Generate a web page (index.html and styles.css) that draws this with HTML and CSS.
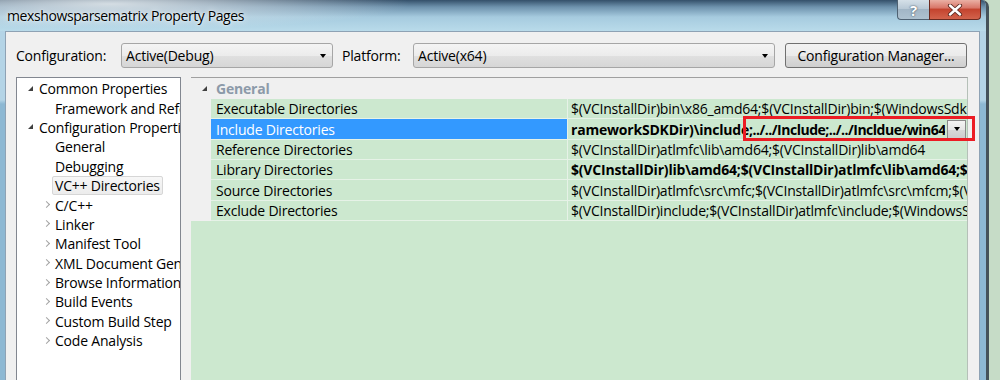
FILE: index.html
```html
<!DOCTYPE html>
<html lang="en">
<head>
    <meta charset="UTF-8">
    <title>mexshowsparsematrix Property Pages</title>
    <link rel="stylesheet" href="styles.css">
</head>
<body>
<div class="window">
    <!-- caption -->
    <div class="titlebar">
        <span class="title">mexshowsparsematrix Property Pages</span>
        <div class="caption-btns">
            <span class="cb help">?</span>
            <span class="cb close">
                <svg width="16" height="12" viewBox="0 0 16 12">
                    <path d="M3 1.5 L13 10.5 M13 1.5 L3 10.5" stroke="#5a2a22" stroke-width="4.2" stroke-linecap="round"/>
                    <path d="M3 1.5 L13 10.5 M13 1.5 L3 10.5" stroke="#ffffff" stroke-width="2.4" stroke-linecap="round"/>
                </svg>
            </span>
        </div>
    </div>

    <div class="client">
        <!-- configuration / platform -->
        <div class="toolbar">
            <label class="lbl cfg">Configuration:</label>
            <div class="combo c1"><span>Active(Debug)</span><i class="arrow"></i></div>
            <label class="lbl plat">Platform:</label>
            <div class="combo c2"><span>Active(x64)</span><i class="arrow"></i></div>
            <button class="btn">Configuration Manager...</button>
        </div>

        <div class="panes">
            <!-- tree -->
            <ul class="tree">
                <li class="node"><i class="exp"></i>Common Properties</li>
                <li class="leaf">Framework and References</li>
                <li class="node"><i class="exp"></i>Configuration Properties</li>
                <li class="leaf">General</li>
                <li class="leaf">Debugging</li>
                <li class="leaf current"><span>VC++ Directories</span></li>
                <li class="closed"><i class="chev"></i>C/C++</li>
                <li class="closed"><i class="chev"></i>Linker</li>
                <li class="closed"><i class="chev"></i>Manifest Tool</li>
                <li class="closed"><i class="chev"></i>XML Document Generator</li>
                <li class="closed"><i class="chev"></i>Browse Information</li>
                <li class="closed"><i class="chev"></i>Build Events</li>
                <li class="closed"><i class="chev"></i>Custom Build Step</li>
                <li class="closed"><i class="chev"></i>Code Analysis</li>
            </ul>

            <!-- property grid -->
            <div class="grid">
                <div class="cat"><i class="cat-tri"></i>General</div>
                <div class="prow">
                    <span class="gut"></span>
                    <span class="pname">Executable Directories</span>
                    <span class="pval">$(VCInstallDir)bin\x86_amd64;$(VCInstallDir)bin;$(WindowsSdkDir)bin\NETFX 4.0 Tools;$(WindowsSdkDir)bin;$(VSInstallDir)Common7\Tools\bin</span>
                </div>
                <div class="prow picked">
                    <span class="gut"></span>
                    <span class="pname">Include Directories</span>
                    <span class="pval editbox"><b class="edit-text">rameworkSDKDir)\include<span class="tail">;../../Include;../../Incldue/win64</span></b><span class="dropbtn"><i class="arrow"></i></span></span>
                </div>
                <div class="prow">
                    <span class="gut"></span>
                    <span class="pname">Reference Directories</span>
                    <span class="pval">$(VCInstallDir)atlmfc\lib\amd64;$(VCInstallDir)lib\amd64</span>
                </div>
                <div class="prow">
                    <span class="gut"></span>
                    <span class="pname">Library Directories</span>
                    <span class="pval bold">$(VCInstallDir)lib\amd64;$(VCInstallDir)atlmfc\lib\amd64;$(WindowsSdkDir)lib\x64;../../Lib</span>
                </div>
                <div class="prow">
                    <span class="gut"></span>
                    <span class="pname">Source Directories</span>
                    <span class="pval">$(VCInstallDir)atlmfc\src\mfc;$(VCInstallDir)atlmfc\src\mfcm;$(VCInstallDir)atlmfc\src\atl;$(VCInstallDir)crt\src</span>
                </div>
                <div class="prow">
                    <span class="gut"></span>
                    <span class="pname">Exclude Directories</span>
                    <span class="pval">$(VCInstallDir)include;$(VCInstallDir)atlmfc\include;$(WindowsSdkDir)include;$(FrameworkSDKDir)\include</span>
                </div>

                <!-- annotation box -->
                <div class="callout"></div>
            </div>
        </div>
    </div>
</div>
</body>
</html>
```

FILE: styles.css
```css
body {
    margin: 0;
    width: 1000px;
    height: 380px;
    overflow: hidden;
    font-family: "Open Sans", "Noto Sans", sans-serif;
    font-size: 14px;
    letter-spacing: -0.2px;
    color: #000;
    background: linear-gradient(to right, #8aa590 0, #b8d3ba 6px, #c6dcc7 14px);
}

.window {
    width: 986px;
    height: 380px;
    display: flex;
    flex-direction: column;
    border-right: 3px solid #45525a;
    border-top-right-radius: 7px;
    overflow: hidden;
    background: linear-gradient(to bottom, #b4d4e6 0, #b4d4e6 100px, #8db8d3 104px, #8db8d3 100%);
}

/* caption */
.titlebar {
    height: 31px;
    flex: none;
    display: flex;
    align-items: flex-start;
    padding: 0 5px 0 7px;
    background:
        radial-gradient(ellipse 300px 26px at 110px 4px, rgba(226, 232, 236, 0.9), rgba(226, 232, 236, 0)),
        linear-gradient(to bottom, #34506a 0, #6e92ad 7px, #a6cbdf 17px, #b9dbea 31px);
}

.title {
    font-size: 14px;
    letter-spacing: -0.4px;
    line-height: 20px;
    margin-top: 6px;
    text-shadow: 0 0 6px rgba(255, 255, 255, 0.9), 0 0 2px rgba(255, 255, 255, 0.8);
}

.caption-btns {
    margin-left: auto;
    display: flex;
}

.cb {
    height: 20px;
    display: flex;
    align-items: center;
    justify-content: center;
    border: 1px solid #4f6272;
    border-top: none;
    box-sizing: border-box;
}

.help {
    width: 32px;
    border-bottom-left-radius: 4px;
    border-right: none;
    background: linear-gradient(to bottom, #d5e0e8 0, #b9c9d6 45%, #a2b6c6 50%, #aec2d0 100%);
    color: #fff;
    font-weight: bold;
    font-size: 15px;
    text-shadow: 0 0 2px #4d5f6e, 0 0 1px #4d5f6e;
}

.close {
    width: 52px;
    border-bottom-right-radius: 4px;
    border-color: #6b2a20;
    background: linear-gradient(to bottom, #eab0a4 0, #d9786a 40%, #c4442f 50%, #d2634c 100%);
}

/* client */
.client {
    flex: 1;
    margin: 0 6px 0 5px;
    border: 1px solid #8ea2b4;
    background: #f0f0f0;
    padding: 11px 11px 0 10px;
}

.toolbar {
    height: 25px;
    display: flex;
    align-items: center;
}

.lbl {
    flex: none;
}

.cfg {
    width: 105px;
}

.plat {
    width: 71px;
    margin-left: 9px;
}

.combo {
    flex: none;
    height: 25px;
    box-sizing: border-box;
    display: flex;
    align-items: center;
    padding: 0 6px 0 4px;
    border: 1px solid #a6a6a6;
    border-radius: 3px;
    background: linear-gradient(to bottom, #f4f4f4 0, #ececec 50%, #e0e0e0 51%, #d6d6d6 100%);
}

.combo span {
    flex: 1;
}

.c1 {
    width: 212px;
}

.c2 {
    width: 362px;
}

.arrow {
    width: 0;
    height: 0;
    border-left: 3.5px solid transparent;
    border-right: 3.5px solid transparent;
    border-top: 4px solid #000;
}

.btn {
    width: 182px;
    height: 25px;
    margin-left: 10px;
    padding: 0;
    font: inherit;
    letter-spacing: inherit;
    color: #000;
    border: 1px solid #707070;
    border-radius: 3px;
    background: linear-gradient(to bottom, #f2f2f2 0, #ebebeb 50%, #dddddd 51%, #cfcfcf 100%);
}

.panes {
    margin-top: 9px;
    height: 320px;
    display: flex;
    gap: 10px;
}

/* tree */
.tree {
    width: 165px;
    flex: none;
    box-sizing: border-box;
    margin: 0;
    padding: 1px 0 0;
    list-style: none;
    border: 1px solid #828790;
    background: #fff;
    overflow: hidden;
}

.tree li {
    height: 19.4px;
    display: flex;
    align-items: center;
    white-space: nowrap;
}

.tree .node {
    padding-left: 10px;
}

.tree .leaf {
    padding-left: 38px;
}

.tree .closed {
    padding-left: 27px;
}

.exp {
    width: 12px;
    height: 8px;
    flex: none;
    position: relative;
}

.exp::before,
.cat-tri::before {
    content: "";
    position: absolute;
    left: 1px;
    top: 1px;
    width: 0;
    height: 0;
    border-left: 5px solid transparent;
    border-bottom: 5px solid #404040;
}

.chev {
    width: 11px;
    height: 8px;
    flex: none;
    position: relative;
}

.chev::before {
    content: "";
    position: absolute;
    left: 0;
    top: 1px;
    width: 4px;
    height: 4px;
    border-right: 1px solid #a3a3a3;
    border-bottom: 1px solid #a3a3a3;
    transform: rotate(-45deg);
}

.tree .current {
    padding-left: 35px;
}

.tree .current span {
    height: 19px;
    line-height: 17px;
    box-sizing: border-box;
    padding: 0 2px;
    border: 1px solid #d6d6d6;
    border-radius: 2px;
    background: linear-gradient(to bottom, #f7f7f7, #ececec);
}

/* property grid */
.grid {
    flex: 1;
    min-width: 0;
    position: relative;
    background: #cce8cf;
    border-top: 1px solid #a0a0a0;
    border-right: 1px solid #b5c0b8;
}

.cat {
    height: 21px;
    display: flex;
    align-items: center;
    padding-left: 10px;
    background: #f0f0f0;
    color: #8c9aa9;
    font-weight: bold;
}

.cat-tri {
    width: 15px;
    height: 8px;
    position: relative;
}

.prow {
    height: 20.35px;
    display: flex;
    white-space: nowrap;
}

.gut {
    width: 20px;
    flex: none;
    background: #f0f0f0;
}

.pname,
.pval {
    box-sizing: border-box;
    height: 100%;
    display: flex;
    align-items: center;
    overflow: hidden;
    border-bottom: 1px solid #e6f2e7;
}

.pname {
    width: 357px;
    flex: none;
    padding-left: 5px;
    border-right: 1px solid #e6f2e7;
}

.pval {
    flex: 1;
    min-width: 0;
    padding-left: 3px;
}

.bold {
    font-weight: bold;
}

.picked .pname {
    background: #3399ff;
    color: #fff;
}

.editbox {
    padding-right: 1px;
}

.edit-text {
    flex: 1 1 0;
    min-width: 0;
    overflow: hidden;
    white-space: nowrap;
}

.tail {
    letter-spacing: -0.5px;
}

.dropbtn {
    flex: 0 0 19px;
    width: 19px;
    height: 19px;
    margin-left: 2px;
    box-sizing: border-box;
    display: flex;
    align-items: center;
    justify-content: center;
    border: 1px solid #8a8a8a;
    background: linear-gradient(to bottom, #f4f4f4 0, #e6e6e6 50%, #d8d8d8 51%, #cdcdcd 100%);
}

.callout {
    position: absolute;
    left: 552px;
    top: 38px;
    width: 232px;
    height: 25px;
    box-sizing: border-box;
    border: 3px solid #ec1c24;
}
```
